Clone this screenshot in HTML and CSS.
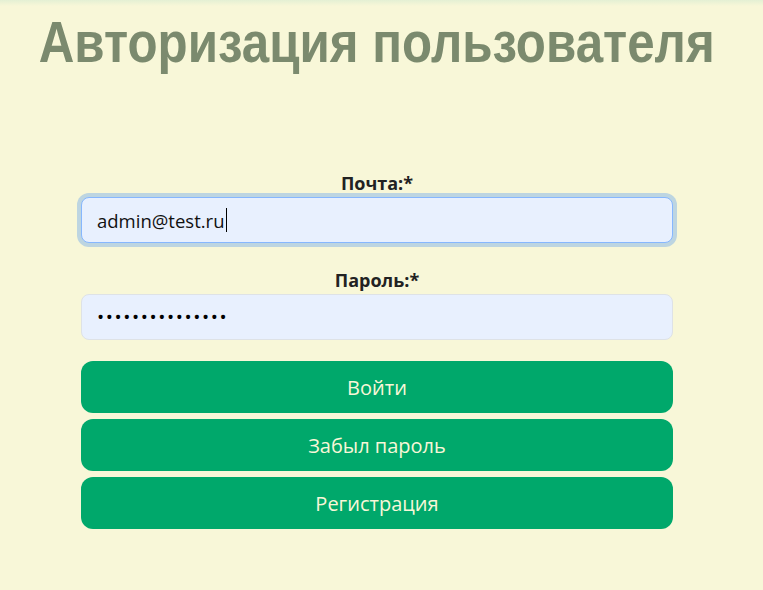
FILE: index.html
```html
<!DOCTYPE html>
<html lang="ru">
<head>
<meta charset="utf-8">
<title>Авторизация пользователя</title>
<link rel="stylesheet" href="styles.css">
</head>
<body>
<main class="page">
  <h1 class="title">Авторизация пользователя</h1>
  <form class="form">
    <label class="label" for="email">Почта:*</label>
    <div class="input input-focus" id="email">admin@test.ru<span class="caret"></span></div>
    <label class="label label-second" for="pass">Пароль:*</label>
    <div class="input input-pass" id="pass">•••••••••••••••</div>
    <div class="buttons">
      <button type="button" class="btn">Войти</button>
      <button type="button" class="btn">Забыл пароль</button>
      <button type="button" class="btn">Регистрация</button>
    </div>
  </form>
</main>
</body>
</html>
```
FILE: styles.css
```css
html, body {
  margin: 0;
  padding: 0;
}
body {
  width: 763px;
  height: 590px;
  background: linear-gradient(to bottom, #e4f0d4 0px, #f8f7d8 6px, #f8f7d8 100%);
  font-family: "Open Sans", "Noto Sans", sans-serif;
  color: #212529;
  overflow: hidden;
}
.page {
  width: 754px;
  display: flex;
  flex-direction: column;
  align-items: center;
}
.title {
  margin: 9px 0 0 0;
  font-family: "Liberation Sans", Arial, sans-serif;
  font-weight: bold;
  font-size: 58px;
  line-height: 66px;
  color: #7b8a6e;
  white-space: nowrap;
  transform: scaleX(0.85);
}
.form {
  width: 592px;
  margin-top: 97px;
  display: flex;
  flex-direction: column;
}
.label {
  text-align: center;
  font-family: "Open Sans", sans-serif;
  font-weight: bold;
  font-size: 18px;
  line-height: 22px;
  color: #222;
  margin-bottom: 3px;
}
.label-second {
  margin-top: 26px;
  margin-bottom: 3px;
}
.input {
  box-sizing: border-box;
  height: 46px;
  padding: 0 15px;
  display: flex;
  align-items: center;
  background: #e8f0fe;
  border: 1px solid #dee2e6;
  border-radius: 8px;
  font-size: 18.5px;
  color: #111;
}
.input-focus {
  border-color: #86b7fe;
  box-shadow: 0 0 0 4px rgba(13, 110, 253, 0.25);
}
.caret {
  display: inline-block;
  width: 1px;
  height: 24px;
  background: #000;
  margin-left: 1px;
}
.input-pass {
  font-size: 19px;
  letter-spacing: 1.6px;
  color: #000;
}
.buttons {
  margin-top: 21px;
  display: flex;
  flex-direction: column;
  gap: 6px;
}
.btn {
  height: 52px;
  border: none;
  border-radius: 12px;
  background: #00a86b;
  color: #f8f7d8;
  font-family: "Open Sans", "Noto Sans", sans-serif;
  font-size: 20px;
}
```
